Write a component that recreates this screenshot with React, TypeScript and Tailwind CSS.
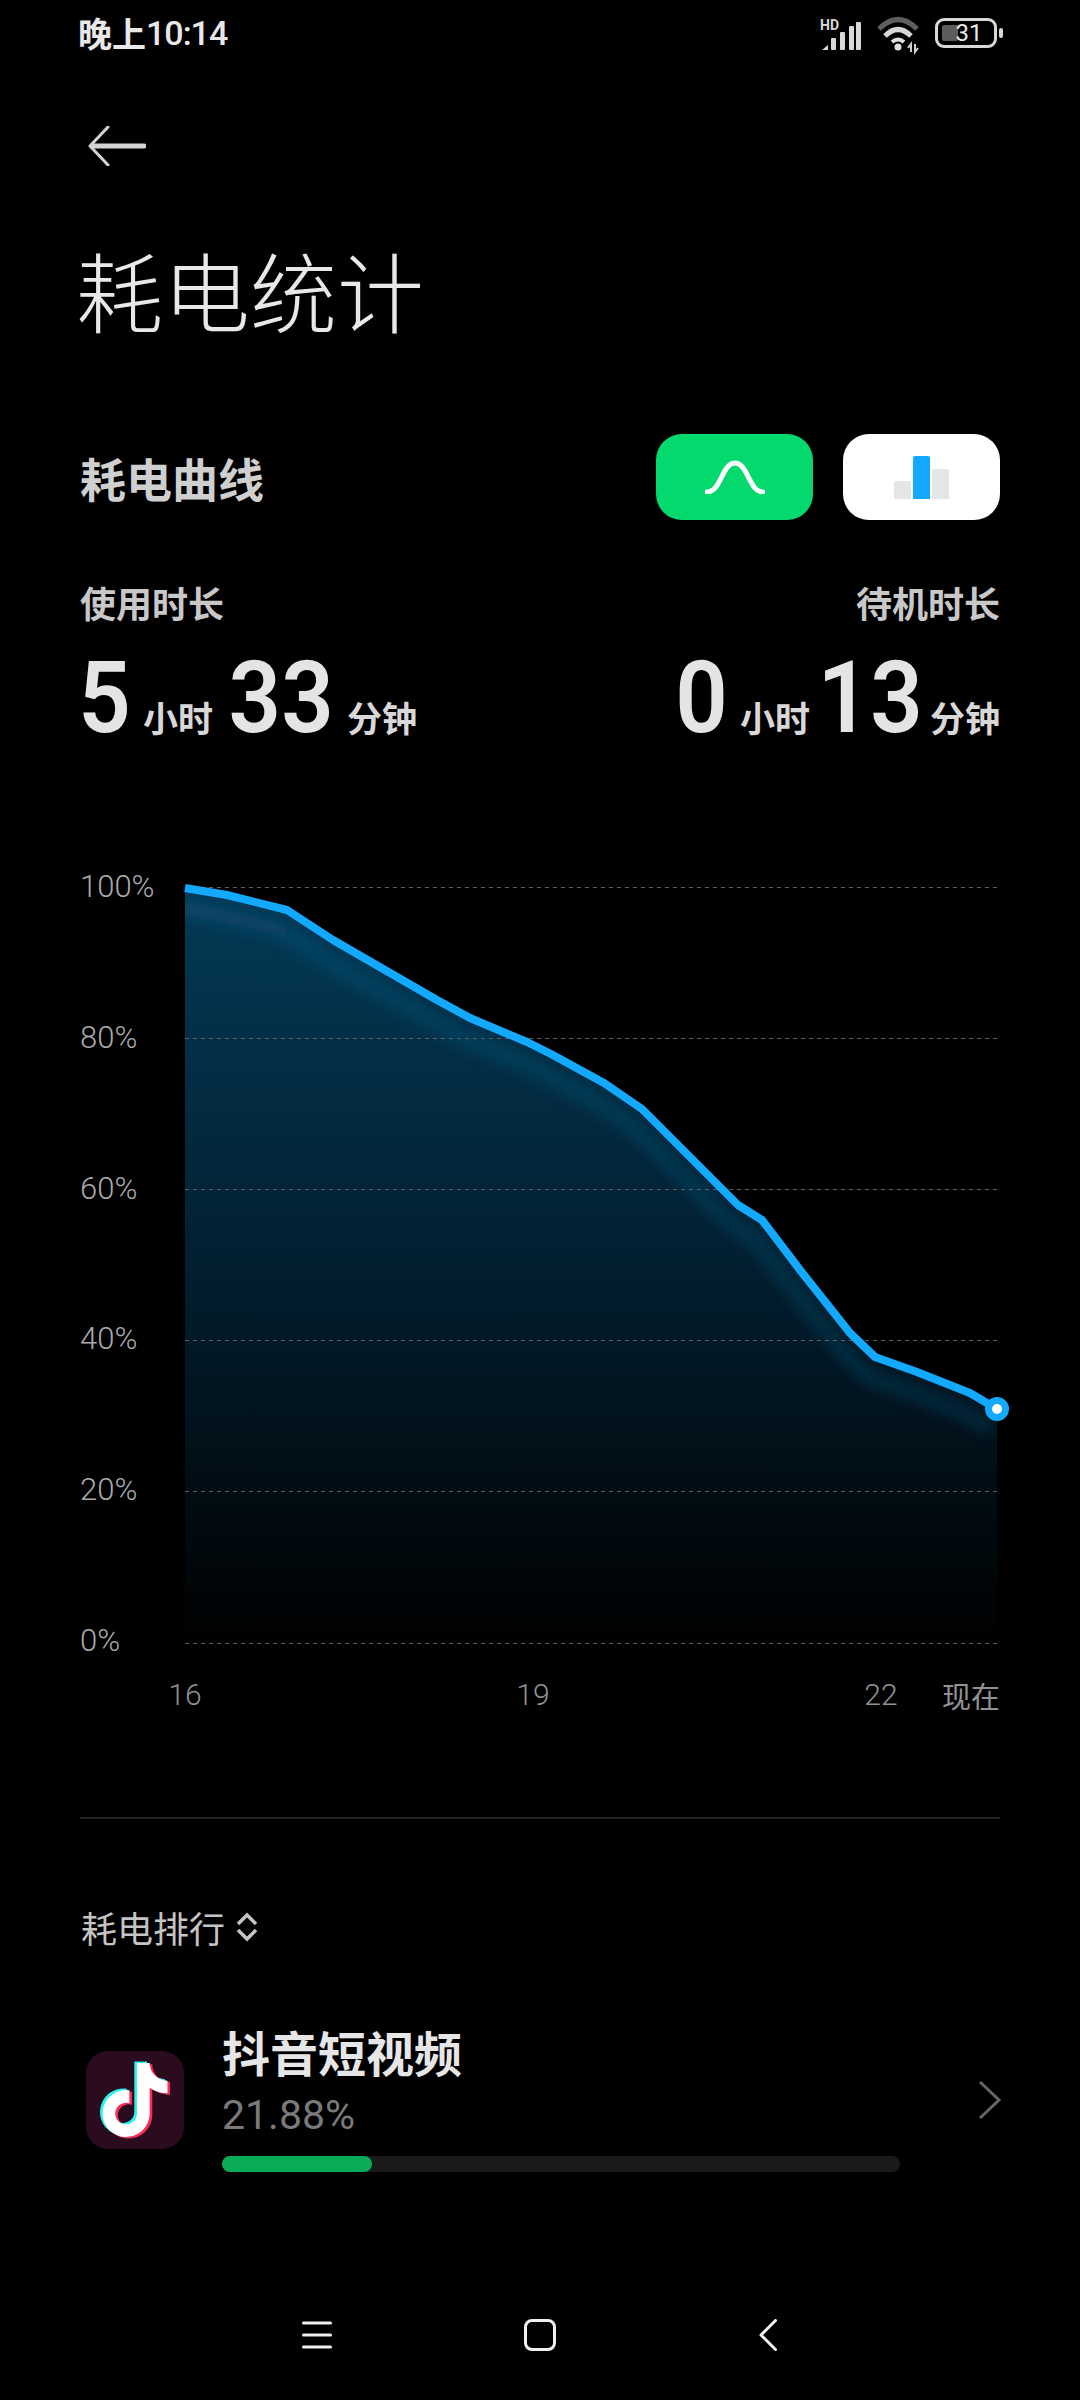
import React from 'react'

const yLabels = ['100%', '80%', '60%', '40%', '20%', '0%']
const gridY = [887.5, 1038.5, 1189.5, 1340.5, 1491.5, 1643.5]

const curve: [number, number][] = [
  [185, 888], [227, 895], [287, 910], [333, 940], [385, 970], [437, 1000], [470, 1018],
  [527, 1042], [551, 1054], [604, 1083], [642, 1109], [693, 1160], [738, 1205], [762, 1220],
  [800, 1270], [850, 1333], [875, 1357], [917, 1372], [970, 1393], [997, 1409],
]
const linePath = curve.map(([x, y], i) => `${i === 0 ? 'M' : 'L'}${x} ${y}`).join(' ')
const areaPath = `${linePath} L997 1644 L185 1644 Z`

const noteD =
  'M448,209.91a210.06,210.06,0,0,1-122.77-39.25V349.38A162.55,162.55,0,1,1,185,188.31V278.2a74.62,74.62,0,1,0,52.23,71.18V0l88,0a121.18,121.18,0,0,0,1.86,22.17h0A122.18,122.18,0,0,0,381,102.39a121.43,121.43,0,0,0,67,20.14Z'

const Num = ({ value, width }: { value: string; width: string }) => (
  <span className={`${width} flex justify-center text-[100px] leading-[110px] font-['Roboto',sans-serif] font-semibold`}>
    <span className="inline-block scale-x-[0.92]">{value}</span>
  </span>
)

const Unit = ({ label }: { label: string }) => (
  <span className="text-[35px] leading-[40px] font-semibold text-[#d8d8d8]">{label}</span>
)

export default function App() {
  return (
    <div className="w-[1080px] h-[2400px] bg-black overflow-hidden font-['Noto_Sans_CJK_SC',sans-serif]">
      {/* status bar */}
      <div className="h-[66px] pl-[78px] pr-[77px] flex items-center justify-between">
        <div className="flex items-center text-[34px] leading-[40px] font-semibold text-[#e8e8e8]">
          <span>晚上</span>
          <span className="font-['Roboto',sans-serif] font-medium tracking-[-1px]">10:14</span>
        </div>
        <div className="flex items-center">
          <svg width="100" height="40" viewBox="0 0 100 40" className="overflow-visible">
            <text x="0" y="17" fill="#d8d8d8" fontSize="14" fontWeight="700" fontFamily="Roboto">HD</text>
            <path d="M2 37 l6 -5 v5Z" fill="#d8d8d8" />
            <rect x="11" y="25" width="5" height="12" rx="1" fill="#d8d8d8" />
            <rect x="20" y="19" width="5" height="18" rx="1" fill="#d8d8d8" />
            <rect x="29" y="13" width="5" height="24" rx="1" fill="#d8d8d8" />
            <rect x="36" y="9" width="5" height="28" rx="1" fill="#d8d8d8" />
            <path d="M59 16 Q78 -3 97 16" fill="none" stroke="#5e5e5e" strokeWidth="5" />
            <path d="M65 23 Q78 10 91 23" fill="none" stroke="#d8d8d8" strokeWidth="5" />
            <path d="M72 29 Q78 24 84 29" fill="none" stroke="#e0e0e0" strokeWidth="4" />
            <circle cx="78" cy="34" r="3.5" fill="#e0e0e0" />
            <path d="M91 39 V31 l-3 4 M95 31 V39 l3 -4" fill="none" stroke="#d0d0d0" strokeWidth="2" />
          </svg>
          <div className="flex items-center ml-[15px]">
            <div className="relative w-[62px] h-[30px] rounded-[9px] border-[3px] border-[#d8d8d8] flex items-center justify-center">
              <div className="absolute left-[4px] top-[4px] w-[16px] h-[16px] rounded-[2px] bg-[#5c5c5c]" />
              <span className="relative pl-[6px] font-['Roboto',sans-serif] text-[24px] leading-[24px] text-[#e8e8e8]">31</span>
            </div>
            <div className="ml-[2px] w-[4px] h-[10px] rounded-[2px] bg-[#d8d8d8]" />
          </div>
        </div>
      </div>

      {/* back arrow */}
      <div className="h-[60px] mt-[50px] pl-[88px] flex items-center">
        <svg width="58" height="40" viewBox="0 0 58 40">
          <path d="M56 20 H4" fill="none" stroke="#d4d4d4" strokeWidth="5" strokeLinecap="round" />
          <path d="M20 1 L2 20 L20 39" fill="none" stroke="#d4d4d4" strokeWidth="3" strokeLinecap="round" strokeLinejoin="round" />
        </svg>
      </div>

      {/* title */}
      <h1 className="mt-[63px] pl-[76px] text-[87px] leading-[100px] font-extralight text-[#e8e8e8]">耗电统计</h1>

      {/* section header */}
      <div className="mt-[95px] px-[80px] flex items-center justify-between">
        <h2 className="text-[46px] leading-[58px] font-bold text-[#cfcfcf]">耗电曲线</h2>
        <div className="flex gap-[30px]">
          <div className="w-[157px] h-[86px] rounded-[26px] bg-[#03d96c] flex items-center justify-center">
            <svg width="60" height="34" viewBox="0 0 60 34">
              <path d="M2 32 C16 32 17 3 30 3 C43 3 44 32 58 32" fill="none" stroke="#fff" strokeWidth="5" strokeLinecap="round" />
            </svg>
          </div>
          <div className="w-[157px] h-[86px] rounded-[26px] bg-white flex items-end justify-center gap-[2px] pb-[21px]">
            <div className="w-[17px] h-[18px] rounded-t-[2px] bg-[#e5e5e5]" />
            <div className="w-[17px] h-[43px] rounded-t-[2px] bg-[#12a9ff]" />
            <div className="w-[17px] h-[30px] rounded-t-[2px] bg-[#e5e5e5]" />
          </div>
        </div>
      </div>

      {/* durations */}
      <div className="mt-[60px] px-[80px] flex justify-between text-[#e4e4e4]">
        <div className="flex flex-col">
          <span className="text-[36px] leading-[44px] font-semibold text-[#c8c8c8]">使用时长</span>
          <div className="mt-[19px] flex items-baseline">
            <Num value="5" width="w-[50px]" />
            <span className="ml-[13px]"><Unit label="小时" /></span>
            <Num value="33" width="ml-[15px] w-[106px]" />
            <span className="ml-[13px]"><Unit label="分钟" /></span>
          </div>
        </div>
        <div className="flex flex-col items-end">
          <span className="text-[36px] leading-[44px] font-semibold text-[#c8c8c8]">待机时长</span>
          <div className="mt-[19px] flex items-baseline">
            <Num value="0" width="w-[50px]" />
            <span className="ml-[13px]"><Unit label="小时" /></span>
            <Num value="13" width="ml-[14px] w-[92px]" />
            <span className="ml-[14px]"><Unit label="分钟" /></span>
          </div>
        </div>
      </div>

      {/* chart */}
      <div className="mt-[119px] ml-[80px] w-[920px] h-[787px] flex items-start">
        <div className="w-[105px] h-[784px] flex flex-col justify-between font-['Roboto',sans-serif] font-light text-[31px] leading-[30px] text-[#aaaaaa]">
          {yLabels.map(l => (
            <span key={l}>{l}</span>
          ))}
        </div>
        <svg width="815" height="787" viewBox="185 872 815 787" className="overflow-visible">
          <defs>
            <linearGradient id="fill" x1="0" y1="887" x2="0" y2="1644" gradientUnits="userSpaceOnUse">
              <stop offset="0" stopColor="#033a57" />
              <stop offset="0.5" stopColor="#021f30" />
              <stop offset="1" stopColor="#000" />
            </linearGradient>
            <linearGradient id="band" x1="0" y1="887" x2="0" y2="1450" gradientUnits="userSpaceOnUse">
              <stop offset="0" stopColor="#07486a" />
              <stop offset="1" stopColor="#03283a" />
            </linearGradient>
            <clipPath id="area">
              <path d={areaPath} />
            </clipPath>
            <filter id="blur" x="-10%" y="-10%" width="120%" height="120%">
              <feGaussianBlur stdDeviation="7" />
            </filter>
          </defs>
          <path d={areaPath} fill="url(#fill)" />
          <g clipPath="url(#area)">
            <path d={linePath} transform="translate(-6 20)" fill="none" stroke="url(#band)" strokeWidth="14" filter="url(#blur)" />
          </g>
          {gridY.map(y => (
            <line key={y} x1="185" x2="998" y1={y} y2={y} stroke="#5a5f62" strokeWidth="1" strokeDasharray="4 4" />
          ))}
          <path d={linePath} fill="none" stroke="#12a9ff" strokeWidth="8" strokeLinejoin="round" />
          <circle cx="997" cy="1409" r="8.5" fill="#fff" stroke="#12a9ff" strokeWidth="7" />
        </svg>
      </div>

      {/* x labels */}
      <div className="mt-[19px] mx-[80px] pl-[75px] flex justify-between text-[30px] leading-[34px] text-[#929292]">
        <div className="flex gap-[288px] font-['Roboto',sans-serif] font-light">
          <span className="w-[60px] text-center">16</span>
          <span className="w-[60px] text-center">19</span>
          <span className="w-[60px] text-center">22</span>
        </div>
        <span className="text-[29px]">现在</span>
      </div>

      <div className="mt-[105px] mx-[80px] h-[2px] bg-[#222]" />

      {/* ranking */}
      <div className="mt-[83px] pl-[81px] h-[50px] flex items-center">
        <span className="text-[36px] leading-[50px] text-[#c4c4c4]">耗电排行</span>
        <svg width="22" height="30" viewBox="0 0 22 30" className="ml-[11px]">
          <path d="M2 12 L11 3 L20 12 M2 18 L11 27 L20 18" fill="none" stroke="#c4c4c4" strokeWidth="3.5" />
        </svg>
      </div>

      <div className="mt-[68px] pl-[86px] flex items-start">
        <div className="mt-[31px] w-[98px] h-[98px] rounded-[22px] bg-[#2a0c1e] flex items-center justify-center">
          <svg width="72" height="80" viewBox="-20 -20 488 552">
            <path d={noteD} fill="#25f4ee" transform="translate(-18 -10)" />
            <path d={noteD} fill="#fe2c55" transform="translate(18 10)" />
            <path d={noteD} fill="#fff" />
          </svg>
        </div>
        <div className="ml-[38px] w-[678px] flex flex-col">
          <span className="-mt-[1px] text-[48px] leading-[64px] font-bold text-[#e6e6e6]">抖音短视频</span>
          <span className="mt-[1px] font-['Roboto',sans-serif] font-normal text-[41px] leading-[62px] text-[#7a7a7a]">21.88%</span>
          <div className="mt-[10px] h-[16px] w-full rounded-full bg-[#1a1a1a]">
            <div className="h-full w-[150px] rounded-full bg-[#0aad57]" />
          </div>
        </div>
        <svg width="24" height="40" viewBox="0 0 24 40" className="ml-[78px] mt-[60px]">
          <path d="M2 2 L21 20 L2 38" fill="none" stroke="#666" strokeWidth="3" />
        </svg>
      </div>

      {/* nav bar */}
      <div className="mt-[147px] pl-[302px] flex items-center">
        <svg width="30" height="32" viewBox="0 0 30 32">
          <path d="M1.5 4 H28.5 M1.5 16 H28.5 M1.5 28 H28.5" stroke="#f0f0f0" strokeWidth="3" strokeLinecap="round" />
        </svg>
        <div className="ml-[192px] w-[32px] h-[32px] rounded-[8px] border-[3px] border-[#f0f0f0]" />
        <svg width="18" height="32" viewBox="0 0 18 32" className="ml-[203px]">
          <path d="M16.5 1.5 L2 16 L16.5 30.5" fill="none" stroke="#f0f0f0" strokeWidth="3" strokeLinecap="round" strokeLinejoin="round" />
        </svg>
      </div>
    </div>
  )
}
